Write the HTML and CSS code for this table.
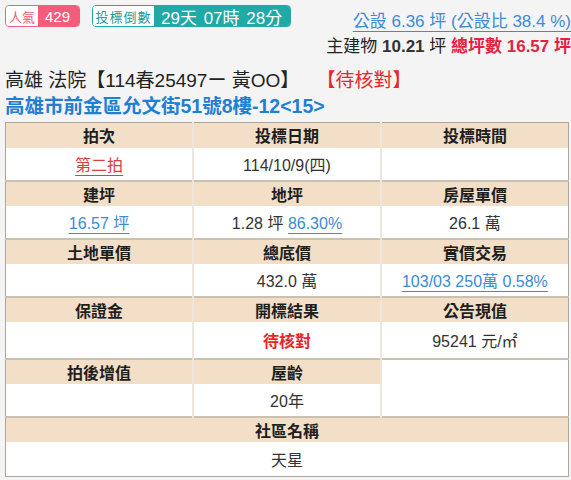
FILE: index.html
```html
<!DOCTYPE html>
<html lang="zh-Hant">
<head>
<meta charset="utf-8">
<link rel="stylesheet" href="styles.css">
</head>
<body>
<div class="page">
  <div class="top">
    <div class="badges">
      <span class="badge pink"><span class="lbl">人氣</span><span class="val">429</span></span>
      <span class="badge teal"><span class="lbl">投標倒數</span><span class="val">29天 07時 28分</span></span>
    </div>
    <div class="area">
      <div class="line1"><a class="link">公設 6.36 坪 (公設比 38.4 %)</a></div>
      <div class="line2">主建物 <b>10.21</b> 坪 <span class="total">總坪數 16.57 坪</span></div>
    </div>
  </div>
  <div class="title">高雄 法院【114春25497ー 黃OO】 <span class="status">【待核對】</span></div>
  <div class="addr">高雄市前金區允文街51號8樓-12&lt;15&gt;</div>
  <table class="info">
    <colgroup><col><col><col></colgroup>
    <tr class="hd first"><th>拍次</th><th>投標日期</th><th>投標時間</th></tr>
    <tr class="dt"><td><a class="link red">第二拍</a></td><td>114/10/9(四)</td><td></td></tr>
    <tr class="hd"><th>建坪</th><th>地坪</th><th>房屋單價</th></tr>
    <tr class="dt"><td><a class="link">16.57 坪</a></td><td>1.28 坪 <a class="link">86.30%</a></td><td>26.1 萬</td></tr>
    <tr class="hd"><th>土地單價</th><th>總底價</th><th>實價交易</th></tr>
    <tr class="dt"><td></td><td>432.0 萬</td><td><a class="link">103/03 250萬 0.58%</a></td></tr>
    <tr class="hd"><th>保證金</th><th>開標結果</th><th>公告現值</th></tr>
    <tr class="dt tall"><td></td><td class="pending">待核對</td><td>95241 元/㎡</td></tr>
    <tr class="hd"><th>拍後增值</th><th>屋齡</th><th class="blank" rowspan="2"></th></tr>
    <tr class="dt"><td></td><td>20年</td></tr>
    <tr class="hd"><th colspan="3">社區名稱</th></tr>
    <tr class="dt last"><td colspan="3">天星</td></tr>
  </table>
</div>
</body>
</html>
```

FILE: styles.css
```css
* { box-sizing: border-box; }
html, body { margin: 0; padding: 0; background: #f4f4f4; }
body {
  font-family: "Liberation Sans", "Noto Sans CJK TC", sans-serif;
  color: #222;
  width: 571px;
  overflow: hidden;
}
.page { padding: 5px 2px 0 5px; }

.top { display: flex; justify-content: space-between; align-items: flex-start; }
.badges { display: flex; gap: 12px; flex-shrink: 0; }
.badge {
  display: inline-flex;
  height: 22px;
  border-radius: 4px;
  overflow: hidden;
  border: 1px solid;
  align-items: stretch;
  white-space: nowrap;
}
.badge .lbl {
  background: #fff;
  display: flex; align-items: center; justify-content: center;
  font-size: 13px;
  white-space: nowrap;
}
.badge .val {
  display: flex; align-items: center;
  color: #fff;
  white-space: nowrap;
}
.pink { border-color: #f0607c; }
.pink .lbl { color: #ef5b78; width: 32px; }
.pink .val { background: #f35d7b; font-size: 15px; padding: 0 9px 0 7px; }
.teal { border-color: #22aaa8; }
.teal .lbl { color: #1d9c9a; width: 61px; letter-spacing: 1px; }
.teal .val { background: #1faaa7; font-size: 17px; padding: 0 8px 0 7px; word-spacing: 2px; }

.area { text-align: right; margin-right: -2px; white-space: nowrap; }
.line1 { font-size: 17px; height: 27px; padding-top: 2px; }
.line2 { font-size: 17px; color: #222; }
.line2 b { font-weight: bold; color: #333; }
.total { color: #e5213f; font-weight: bold; }

.link { color: #3a8bd8; text-decoration: underline; text-underline-offset: 4px; }
.link.red { color: #d9403d; }

.title { font-size: 19px; color: #222; margin-top: 11px; line-height: 25px; }
.status { color: #e6262b; margin-left: 12px; }
.addr { font-size: 19.5px; color: #1e7fd5; font-weight: bold; line-height: 26px; }

.info {
  margin-top: 3px;
  width: 564px;
  table-layout: fixed;
  border-collapse: collapse;
  border: 1px solid #aaa59d;
  background: #fff;
  font-size: 16px;
}
.info th {
  background: #f3dfc7;
  height: 25px;
  padding: 0;
  font-weight: bold;
  color: #1e1e1e;
  border-left: 2px solid #efe5d9;
  text-align: center;
}
.info th.blank { background: #fff; }
.info td {
  height: 33px;
  padding: 0;
  color: #333;
  text-align: center;
  border-left: 2px solid #ebe6de;
}
.info tr.tall td { height: 37px; }
.info tr.last td { height: 35px; }
.info th:first-child, .info td:first-child { border-left: none; }
.info tr.hd th { border-top: 2px solid #c9c0b2; }
.info tr.first th { border-top: none; }
.info td.pending { color: #e6262b; font-weight: bold; }
```
